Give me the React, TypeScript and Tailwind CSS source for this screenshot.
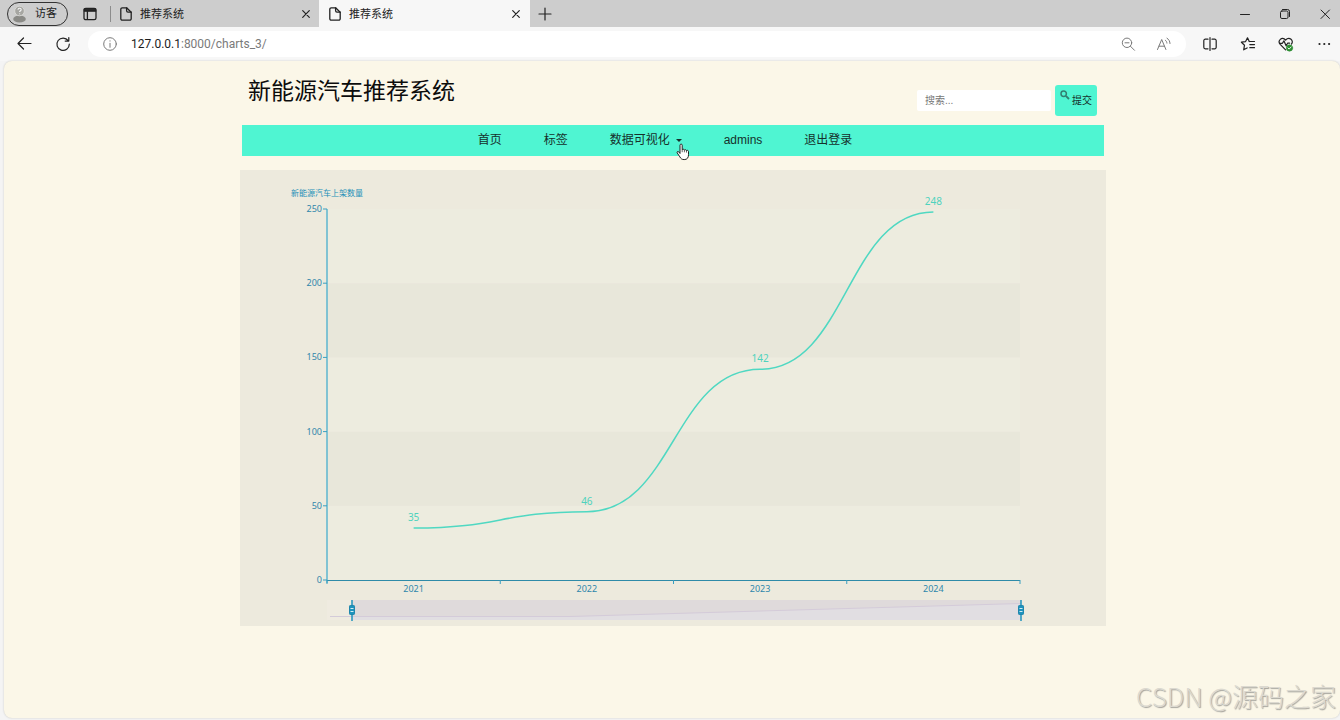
import type { ReactNode } from "react";

const UI_FONT = "font-['Noto_Sans','Noto_Sans_CJK_SC',sans-serif]";
const PAGE_FONT = "font-['Liberation_Sans','Noto_Sans_CJK_SC',sans-serif]";

function Stroke({ children, size = 16, width = 1 }: { children: ReactNode; size?: number; width?: number }) {
  return (
    <svg
      width={size}
      height={size}
      viewBox={`0 0 ${size} ${size}`}
      fill="none"
      stroke="currentColor"
      strokeWidth={width}
      strokeLinecap="round"
      strokeLinejoin="round"
      aria-hidden="true"
    >
      {children}
    </svg>
  );
}

const PageIcon = () => (
  <Stroke width={1.3}>
    <path d="M8.6 1.8H4.2a1.4 1.4 0 0 0-1.4 1.4v9.6a1.4 1.4 0 0 0 1.4 1.4h7.6a1.4 1.4 0 0 0 1.4-1.4V6.2z" />
    <path d="M8.6 1.8v3a1.4 1.4 0 0 0 1.4 1.4h3.2" />
  </Stroke>
);

const CloseIcon = () => (
  <Stroke size={10} width={1.2}>
    <path d="M1.7 1.7l6.6 6.6M8.3 1.7L1.7 8.3" />
  </Stroke>
);

function Tab({ title, active }: { title: string; active?: boolean }) {
  return (
    <div
      className={
        active
          ? "flex h-7 w-[211px] items-center bg-[#f7f7f7] pl-2 pr-1"
          : "flex h-7 w-[204px] items-center px-[3px]"
      }
    >
      <PageIcon />
      <span className="ml-1.5 flex-1 text-[11px] leading-4 text-[#222222]">{title}</span>
      <button type="button" aria-label="关闭标签页" className="flex size-5 items-center justify-center text-[#222222]">
        <CloseIcon />
      </button>
    </div>
  );
}

function TabStrip() {
  return (
    <header className="flex h-[27px] items-center overflow-hidden bg-[#cdcdcd] text-[#222222]">
      <button
        type="button"
        className="ml-[7px] flex h-6 w-[61px] items-center gap-2 rounded-full border border-[#333333] pl-1 text-[11px]"
      >
        <svg width="15" height="18" viewBox="0 0 15 18" aria-hidden="true">
          <ellipse cx="7.5" cy="14" rx="6.3" ry="3.6" fill="#8a8a86" />
          <circle cx="7.5" cy="6" r="4.8" fill="#a6a6a2" stroke="#dededb" strokeWidth="0.8" />
          <path d="M6 4.7c0-2 3.2-2 3.2 0 0 1.1-1.6 1.1-1.6 2.4M7.6 8.6v.6" stroke="#f6f6f6" strokeWidth="1.1" fill="none" />
        </svg>
        访客
      </button>
      <button type="button" aria-label="工作区" className="ml-[14px] flex size-4 items-center justify-center">
        <Stroke width={1.3}>
          <rect x="2" y="2.3" width="12" height="11.4" rx="1.8" />
          <path d="M2.4 3.2h11.2v2H2.4z" fill="currentColor" />
          <path d="M5.4 5v8.4" />
        </Stroke>
      </button>
      <span className="ml-3 mr-1 h-4 w-px bg-[#8c8c8c]" />
      <Tab title="推荐系统" />
      <Tab title="推荐系统" active />
      <button type="button" aria-label="新建标签页" className="ml-[7px]">
        <Stroke width={1.2}>
          <path d="M8 2v12M2 8h12" />
        </Stroke>
      </button>
      <div className="ml-auto flex items-center gap-6 pr-[7px]">
        <button type="button" aria-label="最小化">
          <Stroke>
            <path d="M3.5 8.5h9" />
          </Stroke>
        </button>
        <button type="button" aria-label="还原">
          <Stroke>
            <rect x="3.5" y="5" width="7.5" height="7.5" rx="1.4" />
            <path d="M5.5 3.5h5a2 2 0 0 1 2 2v5" />
          </Stroke>
        </button>
        <button type="button" aria-label="关闭">
          <Stroke>
            <path d="M4 4l8.5 8.5M12.5 4L4 12.5" />
          </Stroke>
        </button>
      </div>
    </header>
  );
}

function AddressBar() {
  return (
    <div className="flex h-[34px] items-center bg-[#f7f7f7] pl-4 pr-2 text-[#222222]">
      <button type="button" aria-label="后退">
        <Stroke width={1.2}>
          <path d="M15 7.500H2M7.500 2L2 7.500l5.500 5.500" />
        </Stroke>
      </button>
      <button type="button" aria-label="刷新" className="ml-[23px]">
        <Stroke width={1.2}>
          <path d="M13.200 4.700A6.200 6.200 0 1 0 14.300 8.200M13.800 1.500v3.600h-3.600" />
        </Stroke>
      </button>
      <div className="ml-[17px] flex h-[26px] flex-1 items-center rounded-full bg-white px-[14px] text-[#7a7a7a]">
        <Stroke>
          <circle cx="8" cy="8" r="6.300" />
          <path d="M8 7.300v4" />
          <path d="M8 4.800v.3" />
        </Stroke>
        <div className="ml-[13px] flex-1 font-[Roboto,sans-serif] text-[12px] leading-4">
          <span className="text-[#1c1c1c]">127.0.0.1</span>:8000/charts_3/
        </div>
        <button type="button" aria-label="缩放">
          <Stroke>
            <circle cx="7" cy="6.800" r="4.700" />
            <path d="M10.500 10.300l4 4M5 6.800h4" />
          </Stroke>
        </button>
        <button type="button" aria-label="大声朗读" className="ml-5">
          <Stroke>
            <path d="M1.500 13.500L5.700 3.500l4.200 10M3 10.200h5.400" />
            <path d="M9.300 4.200c1 .7 1.500 1.600 1.600 2.900M11 2.200c1.900 1.200 2.900 3 3 5.300" />
          </Stroke>
        </button>
      </div>
      <div className="ml-4 flex items-center gap-[22px]">
        <button type="button" aria-label="分屏">
          <Stroke width={1.2}>
            <path d="M6 3.200H3.300A1.500 1.500 0 0 0 1.800 4.700v6.600a1.500 1.500 0 0 0 1.500 1.500H6M10 3.200h2.700a1.500 1.500 0 0 1 1.500 1.500v6.600a1.500 1.500 0 0 1-1.500 1.500H10M8 1.500v13" />
          </Stroke>
        </button>
        <button type="button" aria-label="收藏夹">
          <Stroke width={1.200}>
            <path d="M9.300 5.500L7.500 1.800 5.600 5.600 1.400 6.200l3.100 3-.8 4.600 3.400-1.900" />
            <path d="M9.300 5.500h5.200M9.800 8.600h4.700M9.800 11.700h4.700" />
          </Stroke>
        </button>
        <button type="button" aria-label="浏览器概要">
          <Stroke width={1.200}>
            <path d="M7.600 13.800L2.200 8.300C-.8 5 3.700-.2 7.600 4c3.900-4.200 8.600 1 5.900 4" />
            <path d="M1.600 7.300h2.800l1.500-2.500 2.200 5 1.500-2.600h2" />
            <circle cx="11.500" cy="12" r="3.200" fill="#2f8f34" stroke="#2f8f34" strokeWidth="0.500" />
            <path d="M10 12l1.100 1.100 2-2.100" stroke="#ffffff" strokeWidth="0.900" />
          </Stroke>
        </button>
        <button type="button" aria-label="设置及其他">
          <svg width="16" height="16" viewBox="0 0 16 16" fill="currentColor" aria-hidden="true">
            <circle cx="3.500" cy="8" r="1.100" />
            <circle cx="8.300" cy="8" r="1.100" />
            <circle cx="13.100" cy="8" r="1.100" />
          </svg>
        </button>
      </div>
    </div>
  );
}

function HandCursor() {
  return (
    <svg
      className="absolute left-[66px] top-[11px]"
      width="15"
      height="18"
      viewBox="0 0 15 18"
      fill="#ffffff"
      stroke="#222222"
      strokeWidth="1"
      strokeLinejoin="round"
      aria-hidden="true"
    >
      <path d="M4 10.500V2.200c0-1.500 2.200-1.500 2.200 0v4.600c.3-.9 2-.8 2.200.3.500-.7 1.900-.5 2.100.5.600-.6 2-.2 2 .9v3.200c0 3-1.300 4.900-4.300 4.900-2.300 0-3.300-.9-4.300-2.700L1.200 9.900c-.6-1.200.7-2 1.600-1z" />
      <path d="M6.200 6.800v2.400M8.400 7.100v2.200M10.500 7.600v2" fill="none" strokeWidth="0.700" />
    </svg>
  );
}

function SiteNav() {
  return (
    <nav className="mx-[2px] mt-[9px] flex h-[31px] items-start justify-center gap-[42px] bg-[#4ff5d2] pr-4 pt-[7px] text-[12px] leading-4 text-[#16302b]">
      <a href="#home">首页</a>
      <a href="#tags">标签</a>
      <a href="#charts" className="relative flex items-center gap-1.5">
        数据可视化
        <svg width="6" height="3" viewBox="0 0 6 3" fill="currentColor" aria-hidden="true">
          <path d="M0 0h6L3 3z" />
        </svg>
        <HandCursor />
      </a>
      <a href="#admins">admins</a>
      <a href="#logout">退出登录</a>
    </nav>
  );
}

const data = [
  { year: "2021", value: 35 },
  { year: "2022", value: 46 },
  { year: "2023", value: 142 },
  { year: "2024", value: 248 },
];

const LEFT = 87;
const RIGHT = 780;
const BOTTOM = 410;
const TOP = 39;
const BAND = (RIGHT - LEFT) / data.length;
const yOf = (v: number) => BOTTOM - (v / 250) * (BOTTOM - TOP);
const points = data.map((d, i) => ({ ...d, x: LEFT + BAND * (i + 0.5), y: yOf(d.value) }));
const curve = points
  .map((p, i) => {
    if (i === 0) return `M${p.x} ${p.y}`;
    const q = points[i - 1];
    const mid = (p.x + q.x) / 2;
    return `C${mid} ${q.y} ${mid} ${p.y} ${p.x} ${p.y}`;
  })
  .join("");

function ZoomHandle({ x }: { x: number }) {
  return (
    <g>
      <path d={`M${x} 430v21`} stroke="#1f93bd" strokeWidth="1.500" />
      <rect x={x - 2.5} y="435.500" width="5" height="9" rx="0.800" fill="#1f93bd" stroke="#1f86ad" />
      <path d={`M${x - 1.5} 438.500h3M${x - 1.5} 441.500h3`} stroke="#d5edf3" />
    </g>
  );
}

function LineChart() {
  return (
    <section className="mt-[14px] bg-[#edeadd]">
      <svg
        viewBox="0 0 866 456"
        className="block h-auto w-full font-['Noto_Sans','Noto_Sans_CJK_SC',sans-serif]"
        role="img"
        aria-label="新能源汽车上架数量"
      >
        {[0, 50, 100, 150, 200].map((v, i) => (
          <rect
            key={v}
            x={LEFT}
            y={yOf(v + 50)}
            width={RIGHT - LEFT}
            height={yOf(v) - yOf(v + 50)}
            fill={i % 2 === 0 ? "#edecdf" : "#e8e7da"}
          />
        ))}
        <text x={LEFT} y="26" textAnchor="middle" fontSize="8" fill="#2590b8">
          新能源汽车上架数量
        </text>
        <path d={`M${LEFT} ${TOP}V${BOTTOM + 3}`} stroke="#5db6cf" strokeWidth="1.500" />
        {[0, 50, 100, 150, 200, 250].map((v) => (
          <g key={v}>
            <path d={`M${LEFT - 4} ${yOf(v)}h4`} stroke="#3a9fc0" />
            <text x="82" y={yOf(v) + 3} textAnchor="end" fontSize="9" fill="#2f87ab">
              {v}
            </text>
          </g>
        ))}
        <path d={`M${LEFT} 410.500H${RIGHT}`} stroke="#2f8ba8" />
        {[0, 1, 2, 3, 4].map((i) => (
          <path key={i} d={`M${LEFT + BAND * i} 410v4`} stroke="#3a9fc0" />
        ))}
        {points.map((p) => (
          <g key={p.year} textAnchor="middle">
            <text x={p.x} y="422" fontSize="9" fill="#2f87ab">
              {p.year}
            </text>
            <text x={p.x} y={p.y - 7} fontSize="10" fill="#4fd3bd">
              {p.value}
            </text>
          </g>
        ))}
        <path d={curve} fill="none" stroke="#4fd8c2" strokeWidth="1.500" />
        <rect x={LEFT} y="430" width="694" height="20" fill="#efebe0" />
        <rect x="112" y="430" width="669" height="20" fill="#dfdadb" />
        <path d="M112 450V446.500H330L781 433.500V450z" fill="#e1dee2" />
        <path d="M90 446.500H330L781 433.500" fill="none" stroke="#d4cbd9" />
        <ZoomHandle x={112} />
        <ZoomHandle x={781} />
      </svg>
    </section>
  );
}

export default function App() {
  return (
    <div className={`flex min-h-screen flex-col bg-[#f4f4f4] ${UI_FONT}`}>
      <TabStrip />
      <AddressBar />
      <div className={`relative mb-[2px] ml-1 flex-1 rounded-lg bg-[#fbf7e8] pb-8 pl-[2px] shadow-[0_0_2px_#c4c4c0] ${PAGE_FONT}`}>
        <div className="mx-auto max-w-[866px]">
          <div className="flex h-[55px] items-start justify-between pl-2 pr-[9px]">
            <h1 className="mt-3 text-[23px] leading-9 text-[#0c0c0c]">新能源汽车推荐系统</h1>
            <form className="mt-6 flex items-center gap-1" onSubmit={(e) => e.preventDefault()}>
              <input
                type="text"
                aria-label="搜索"
                placeholder="搜索..."
                className="h-[21px] w-[134px] rounded-xs bg-white px-2 text-[10px] text-[#333333] placeholder:text-[#777777]"
              />
              <button
                type="submit"
                className="flex h-[31px] w-[42px] items-center justify-center gap-0.5 rounded-[3px] bg-[#4ff5d2] text-[10px] text-[#16302b]"
              >
                <svg width="10" height="10" viewBox="0 0 10 10" className="mb-3" fill="none" stroke="#327f70" aria-hidden="true">
                  <circle cx="3.700" cy="3.700" r="2.700" strokeWidth="1.500" />
                  <path d="M5.800 5.800L9 9" strokeWidth="1.900" />
                </svg>
                提交
              </button>
            </form>
          </div>
          <SiteNav />
          <LineChart />
        </div>
        <div className="absolute bottom-0.5 right-1 font-['Noto_Sans_CJK_SC',sans-serif] text-[26px] font-light leading-10 text-[#dcd9d0] [text-shadow:1px_1px_1px_#a3a29c]">
          CSDN @源码之家
        </div>
      </div>
    </div>
  );
}
